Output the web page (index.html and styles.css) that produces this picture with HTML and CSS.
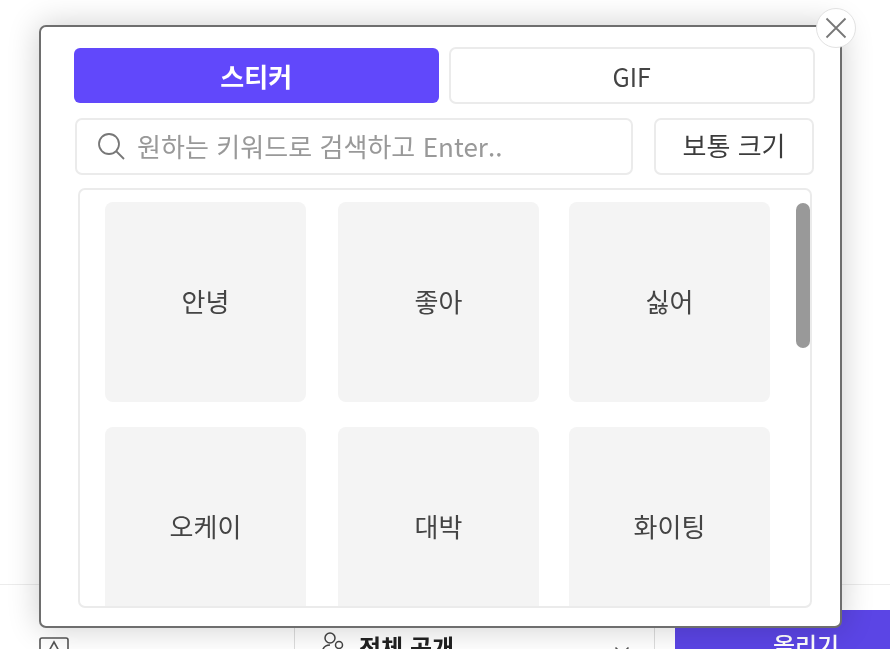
FILE: index.html
```html
<!DOCTYPE html>
<html lang="ko">
<head>
<meta charset="utf-8">
<title>스티커</title>
<link rel="stylesheet" href="styles.css">
</head>
<body>
<div class="page">
  <div class="page-main"></div>
  <footer class="footer">
    <div class="footer-left">
      <svg class="doc-icon" width="30" height="24" viewBox="0 0 30 24" fill="none" stroke="#555" stroke-width="1.6"><rect x="1" y="1" width="28" height="22" rx="2"/><path d="M10 14 L15 5 L20 14"/></svg>
    </div>
    <div class="footer-scope">
      <svg class="user-icon" width="26" height="26" viewBox="0 0 26 26" fill="none" stroke="#444" stroke-width="1.5"><circle cx="10" cy="7" r="5"/><path d="M2 24c0-7 3-10 8-10"/><circle cx="19" cy="14" r="3.5"/><path d="M13 24c0-3 2-5 6-5s6 2 6 5"/></svg>
      <span class="scope-label">전체 공개</span>
      <svg class="chev" width="16" height="10" viewBox="0 0 16 10" fill="none" stroke="#555" stroke-width="1.6"><path d="M1.5 1.5 L8 8 L14.500 1.5"/></svg>
    </div>
    <button class="submit">올리기</button>
  </footer>
</div>

<div class="modal">
  <button class="close" aria-label="닫기">
    <svg width="24" height="24" viewBox="0 0 24 24" fill="none" stroke="#777" stroke-width="1.8"><path d="M2.500 2.500 L21.500 21.500 M21.500 2.500 L2.500 21.500"/></svg>
  </button>
  <div class="tabs">
    <button class="tab tab-on">스티커</button>
    <button class="tab">GIF</button>
  </div>
  <div class="tools">
    <div class="search">
      <svg width="28" height="28" viewBox="0 0 28 28" fill="none" stroke="#777" stroke-width="1.8"><circle cx="12" cy="12" r="10"/><path d="M19 19 L27 27"/></svg>
      <span class="placeholder">원하는 키워드로 검색하고 Enter..</span>
    </div>
    <button class="size">보통 크기</button>
  </div>
  <div class="list">
    <div class="grid">
      <div class="card">안녕</div>
      <div class="card">좋아</div>
      <div class="card">싫어</div>
      <div class="card">오케이</div>
      <div class="card">대박</div>
      <div class="card">화이팅</div>
    </div>
    <div class="thumb"></div>
  </div>
</div>
</body>
</html>
```

FILE: styles.css
```css
* { box-sizing: border-box; }
html, body { margin: 0; padding: 0; height: 100%; overflow: hidden; background: #fff; }
body { font-family: "Noto Sans CJK KR", "Noto Sans", sans-serif; color: #333; filter: blur(0.6px); }

.page { height: 649px; display: flex; flex-direction: column; overflow: hidden; }
.page-main { height: 584px; flex: none; }
.footer { height: 120px; flex: none; border-top: 1px solid #ececec; display: flex; align-items: flex-start; padding: 25px 0 0 39px; }
.footer-left { width: 255px; flex: none; padding-top: 27px; height: 80px; }
.doc-icon { display: block; }
.footer-scope { width: 361px; flex: none; height: 80px; border-left: 1px solid #ddd; border-right: 1px solid #ddd; display: flex; align-items: flex-start; padding: 21px 24px 0 25px; }
.user-icon { flex: none; }
.scope-label { font-size: 24px; font-weight: 700; color: #222; margin-left: 13px; line-height: 30px; flex: 1; margin-top: 1px; }
.chev { margin-top: 15px; }
.submit { margin-left: 20px; flex: none; width: 262px; height: 80px; border: 0; background: #5b45e5; color: #fff; font: 500 24px/30px "Noto Sans CJK KR", sans-serif; padding: 20px 0 0; display: flex; align-items: flex-start; justify-content: center; }

.modal { position: absolute; left: 39px; top: 25px; width: 803px; height: 603px; background: #fff; border: 2px solid #6e6e6e; border-radius: 7px; box-shadow: 0 0 32px rgba(0,0,0,.2); padding: 20px 25px 0 33px; display: flex; flex-direction: column; }
.close { position: absolute; right: -16px; top: -19px; width: 40px; height: 40px; padding: 0; border-radius: 50%; border: 1px solid #e2e2e2; background: #fff; display: flex; align-items: center; justify-content: center; }

.tabs { display: flex; gap: 10px; height: 57px; flex: none; }
.tab { width: 367px; border: 2px solid #ebebeb; border-radius: 7px; background: #fff; color: #444; font: 400 25px/30px "Noto Sans CJK KR", sans-serif; padding: 0; }
.tab-on { width: 365px; height: 55px; margin-top: 1px; border: 0; border-radius: 6px; background: #6148fb; color: #fff; font-weight: 700; font-size: 26px; }

.tools { display: flex; margin: 14px 0 0 1px; height: 57px; flex: none; gap: 21px; }
.search { width: 558px; border: 2px solid #ebebeb; border-radius: 7px; display: flex; align-items: center; padding: 0 0 2px 20px; gap: 12px; }
.placeholder { font-size: 26px; color: #999; white-space: nowrap; letter-spacing: 0.05px; }
.size { width: 160px; border: 2px solid #ebebeb; border-radius: 7px; background: #fff; color: #3c3c3c; font: 400 26px/30px "Noto Sans CJK KR", sans-serif; padding: 0 0 4px; }

.list { position: relative; margin: 13px 0 0 4px; width: 734px; height: 420px; border: 2px solid #ebebeb; border-radius: 7px; overflow: hidden; padding: 12px 0 0 25px; }
.grid { display: grid; grid-template-columns: 233px 231px 201px; row-gap: 25px; }
.card { width: 201px; height: 200px; background: #f4f4f4; border-radius: 8px; display: flex; align-items: center; justify-content: center; font-size: 26px; color: #444; padding-bottom: 4px; }
.thumb { position: absolute; left: 716px; top: 13px; width: 14px; height: 145px; border-radius: 7px; background: #999; }
```
